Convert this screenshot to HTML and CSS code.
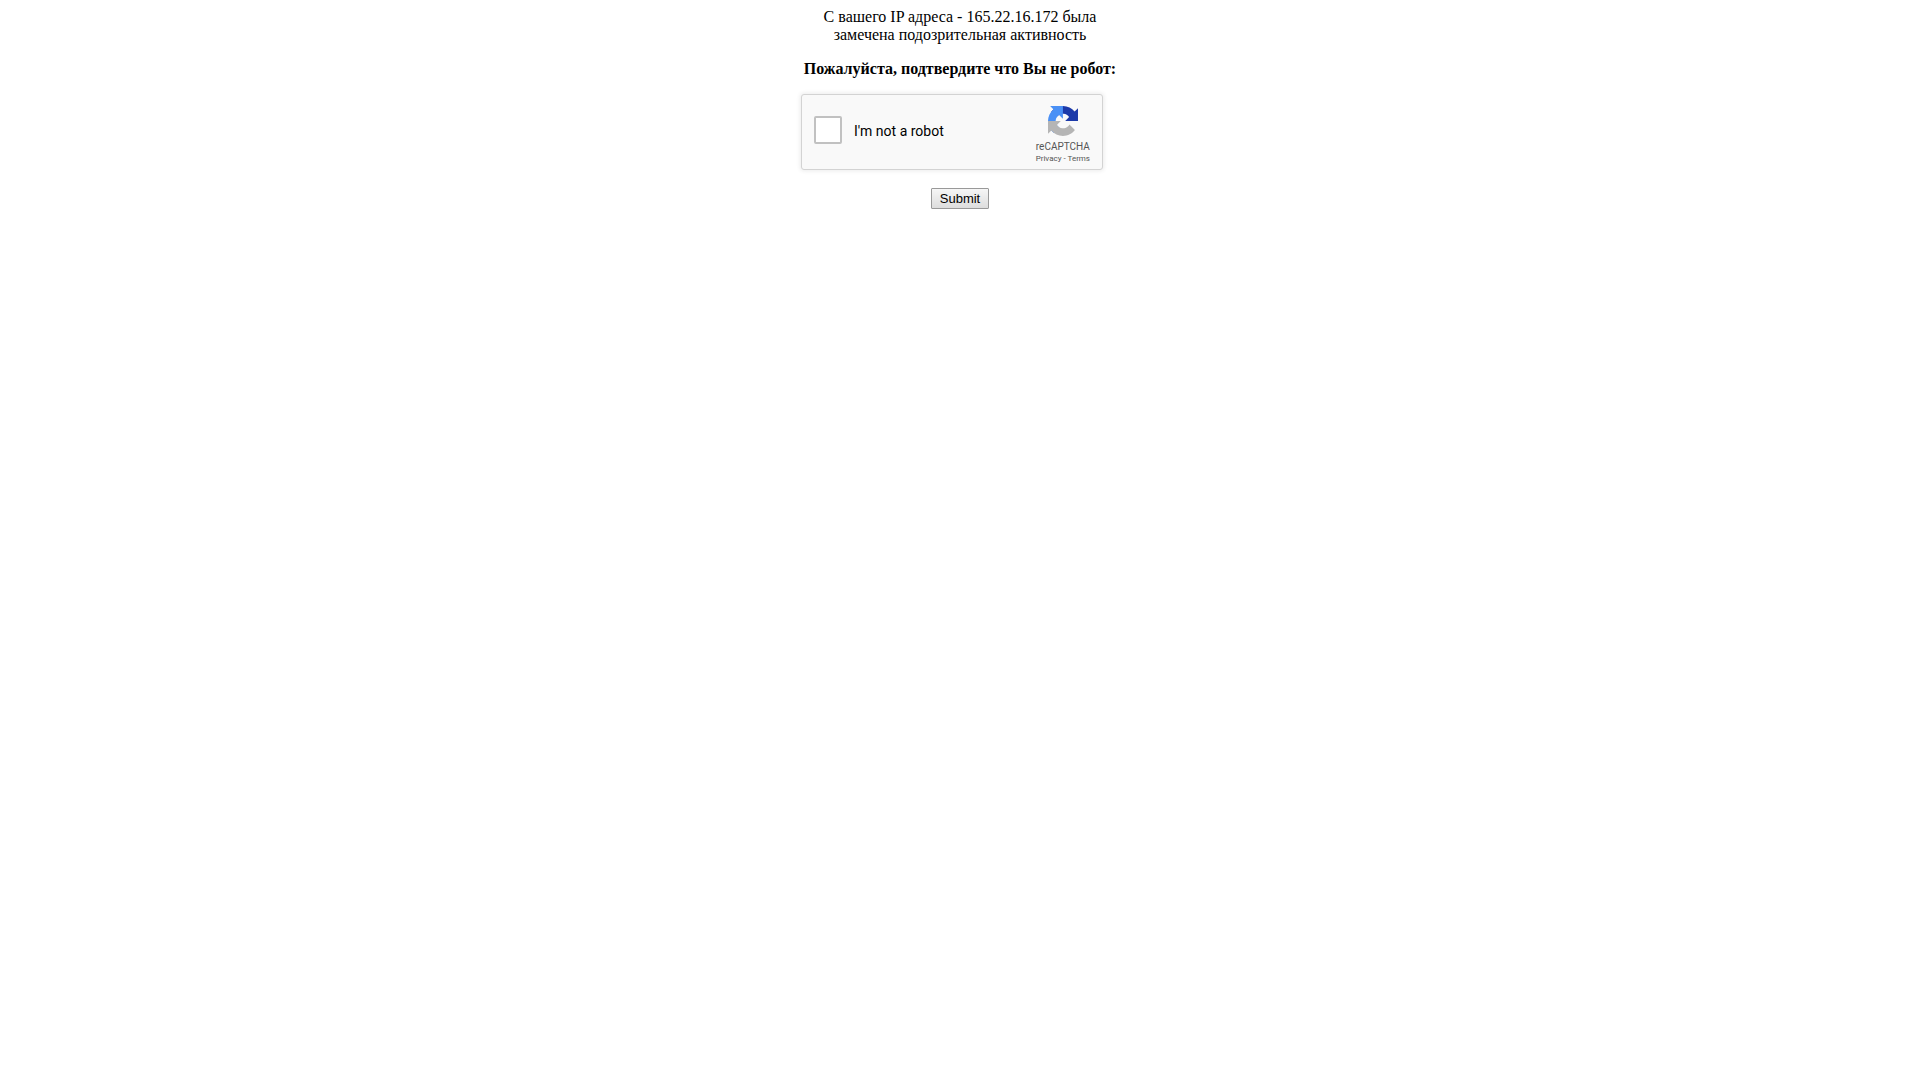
FILE: index.html
```html
<!DOCTYPE html>
<html lang="ru">
<head>
<meta charset="utf-8">
<title>Подтвердите, что Вы не робот</title>
<link rel="stylesheet" href="styles.css">
</head>

<body>
<form class="check" action="#" method="post">
<div class="message">С вашего IP адреса - 165.22.16.172 была замечена подозрительная активность</div>
<p class="request"><b>Пожалуйста, подтвердите что Вы не робот:</b></p>

<div class="captcha">
	<input type="checkbox" id="robot" class="captcha-box">
	<label for="robot" class="captcha-label">I'm not a robot</label>
	<div class="captcha-brand">
		<svg class="captcha-logo" viewBox="0 0 64 64" aria-hidden="true">
			<path fill="#1c3aa9" d="M64 31.955l-.033-1.37V4.687l-7.16 7.16C50.948 4.674 42.033.093 32.05.093c-10.4 0-19.622 4.96-25.458 12.64l11.736 11.86a15.55 15.55 0 0 1 4.754-5.334c2.05-1.6 4.952-2.906 8.968-2.906.485 0 .86.057 1.135.163 4.976.393 9.288 3.14 11.828 7.124l-8.307 8.307L64 31.953"/>
			<path fill="#4a90f5" d="M31.862.094l-1.37.033H4.594l7.16 7.16C4.58 13.147 0 22.06 0 32.046c0 10.4 4.96 19.622 12.64 25.458L24.5 45.768a15.55 15.55 0 0 1-5.334-4.754c-1.6-2.05-2.906-4.952-2.906-8.968 0-.485.057-.86.163-1.135.393-4.976 3.14-9.288 7.124-11.828l8.307 8.307L31.86.095"/>
			<path fill="#b5b5b5" d="M.001 32.045l.033 1.37v25.898l7.16-7.16c5.86 7.173 14.774 11.754 24.76 11.754 10.4 0 19.622-4.96 25.458-12.64l-11.736-11.86a15.55 15.55 0 0 1-4.754 5.334c-2.05 1.6-4.952 2.906-8.968 2.906-.485 0-.86-.057-1.135-.163-4.976-.393-9.288-3.14-11.828-7.124l8.307-8.307c-10.522.04-22.4.066-27.295-.005"/>
		</svg>
		<div class="captcha-name">reCAPTCHA</div>
		<div class="captcha-links"><a href="#">Privacy</a> - <a href="#">Terms</a></div>
	</div>
</div>

<button type="submit" class="submit">Submit</button>
</form>
</body>
</html>
```
FILE: styles.css
```css
body            {margin:8px; background:#FFF; color:#000; font:16px/18px "Liberation Serif", serif;}

.check          {max-width:318px; margin:0 auto; text-align:center;}
.message        {padding:0 16px;}
.request        {margin:16px 0;}

/* captcha widget */
.captcha        {display:flex; align-items:center; box-sizing:border-box; max-width:302px; height:76px; padding:0 12px;
                 border:1px solid #D3D3D3; border-radius:3px; background:#F9F9F9; box-shadow:0 0 4px 1px rgba(0,0,0,.08);
                 font-family:Roboto, sans-serif;}
.captcha-box    {appearance:none; box-sizing:border-box; width:28px; height:28px; margin:0 12px 4px 0;
                 border:2px solid #C1C1C1; border-radius:2px; background:#FFF; cursor:pointer;}
.captcha-label  {flex:1; margin-bottom:2px; font-size:14px; line-height:18px; text-align:left;}
.captcha-brand  {padding-top:7px; color:#555;}
.captcha-logo   {display:block; width:30px; height:30px; margin:0 auto;}
.captcha-name   {margin-top:5px; font-size:10px; line-height:12px;}
.captcha-links  {font-size:8px; line-height:12px;}
.captcha-links a{color:#555; text-decoration:none;}

.submit         {margin-top:18px; padding:1px 8px; border:1px solid #999; border-radius:1px;
                 background:linear-gradient(#F6F6F6, #DDD); color:#000; font:13px/17px "Liberation Sans", sans-serif;}
```
